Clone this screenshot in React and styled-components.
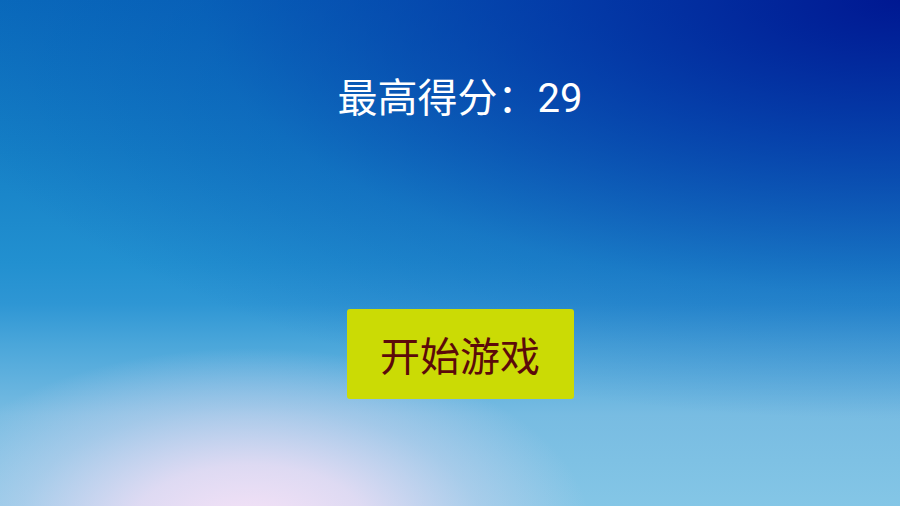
import styled, { createGlobalStyle } from 'styled-components'

const GlobalStyle = createGlobalStyle`
  html, body {
    margin: 0;
    padding: 0;
  }
  body {
    font-family: 'Noto Sans CJK SC', 'Noto Sans', sans-serif;
  }
`

// sky: dark navy in the top-right corner, pale pink glow low on the left
const Screen = styled.div`
  width: 900px;
  height: 506px;
  box-sizing: border-box;
  padding: 77px 0 0 20px;
  display: flex;
  flex-direction: column;
  align-items: center;
  overflow: hidden;
  background:
    radial-gradient(ellipse 340px 180px at 250px 528px, rgba(247, 226, 247, 1) 0%, rgba(238, 222, 245, 0.85) 35%, rgba(212, 214, 240, 0.45) 68%, rgba(200, 210, 240, 0) 100%),
    radial-gradient(ellipse 1000px 420px at 100% 0%, rgba(0, 24, 146, 1) 0%, rgba(0, 40, 160, 0.7) 35%, rgba(0, 60, 170, 0.25) 70%, rgba(0, 70, 180, 0) 100%),
    linear-gradient(180deg, #0a6cbc 0%, #1580c6 30%, #2290d0 52%, #2e96d4 60%, #4aa6da 68%, #78bce2 82%, #84c6e6 100%);
`

const BestScore = styled.h1`
  margin: 0;
  font-family: Roboto, 'Noto Sans CJK SC', sans-serif;
  font-size: 40px;
  line-height: 44px;
  font-weight: 400;
  color: #ffffff;
`

const StartButton = styled.button`
  margin-top: 188px;
  width: 227px;
  height: 90px;
  border: none;
  border-radius: 3px;
  background: #cbdb05;
  color: #5c0a0a;
  font-family: inherit;
  font-size: 40px;
  padding: 0;
  cursor: pointer;
`

export default function App() {
  return (
    <>
      <GlobalStyle />
      <Screen>
        <BestScore>最高得分：29</BestScore>
        <StartButton>开始游戏</StartButton>
      </Screen>
    </>
  )
}
